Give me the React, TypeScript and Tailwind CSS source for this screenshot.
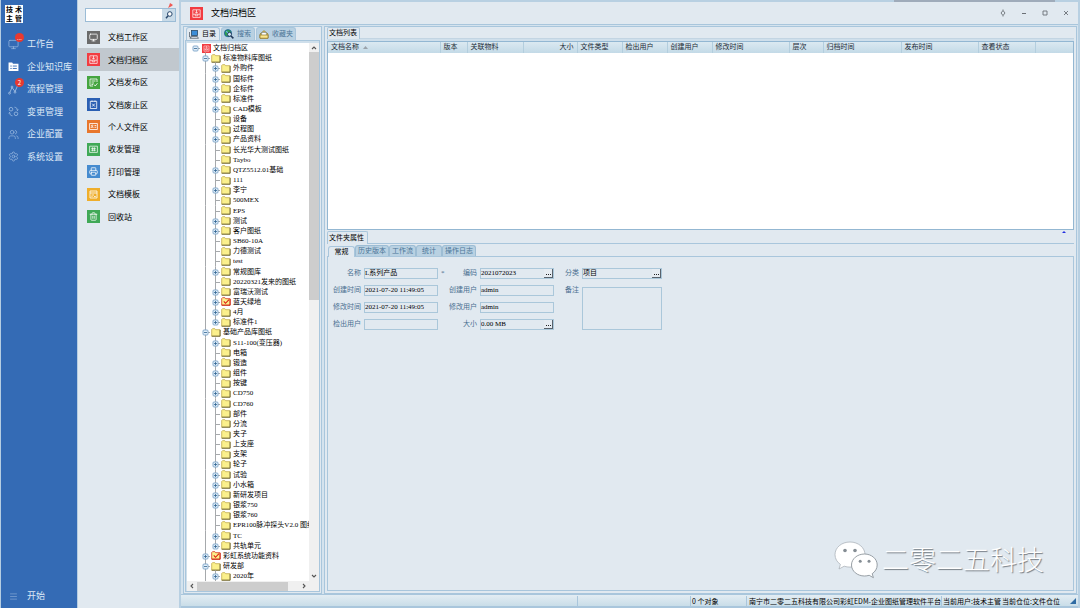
import React, { useState } from "react";
import { Menu, Monitor, Printer, Settings, Trash2, Users } from "lucide-react";

type Icon = React.ComponentType<{ className?: string; strokeWidth?: number }>

interface TreeRow {
     name: string
     level: number
     state?: "plus" | "minus"
     icon?: "root" | "check"
}

const ListFolder: Icon = ({ className }) => (
     <svg viewBox="0 0 11 10" className={className}>
          <path d="M0 0.5h4l1 1.5h6v8H0z" fill="#fff" />
          <path d="M2 4.5h1.5M4.7 4.5h4.5M2 7.2h1.5M4.7 7.2h4.5" stroke="#346bb5" strokeWidth="1" />
     </svg>
)

const FlowIcon: Icon = ({ className }) => (
     <svg viewBox="0 0 11 11" className={className} fill="none" stroke="currentColor" strokeWidth="0.9">
          <path d="M1.800 8.500L4 3.500l3 4 2.500-5.500" />
          <circle cx="1.500" cy="9.200" r="0.900" />
          <circle cx="4" cy="3" r="0.900" />
          <circle cx="7" cy="8.200" r="0.900" />
     </svg>
)

const ChangeIcon: Icon = ({ className }) => (
     <svg viewBox="0 0 11 11" className={className} fill="none" stroke="currentColor" strokeWidth="0.8">
          <circle cx="3" cy="3.200" r="1.800" />
          <circle cx="8" cy="7.800" r="1.800" />
          <path d="M6.500 1.200c2 .2 3 1.500 3 3.300M8.500 3.600l1 1 1-1M4.500 9.800c-2-.2-3-1.500-3-3.300M0.500 7.400l1-1 1 1" />
     </svg>
)

const PublishIcon: Icon = ({ className }) => (
     <svg viewBox="0 0 9 9" className={className} fill="none" stroke="currentColor" strokeWidth="0.8">
          <path d="M8 4V1H1v7h3M2.500 3h4M2.500 5h2.500M2.500 6.500h1.500M5 6.500l1.200 1.500L8.500 5.200" />
     </svg>
)

const AbolishIcon: Icon = ({ className }) => (
     <svg viewBox="0 0 9 9" className={className} fill="none" stroke="currentColor" strokeWidth="0.8">
          <path d="M1.300 1.300h6.400v7.200H1.300zM3 0.500v1.500M6 0.500v1.500M3.200 3.700l2.600 2.800M5.800 3.700L3.200 6.500" />
     </svg>
)

const PersonalIcon: Icon = ({ className }) => (
     <svg viewBox="0 0 9 9" className={className} fill="none" stroke="currentColor" strokeWidth="0.8">
          <path d="M0.600 1.500h7.800v6H0.600zM5.500 3.500h1.800M5.500 5.300h1.800M2 6c0-1.500 2.300-1.500 2.300 0" />
          <circle cx="3.200" cy="3.700" r="0.700" />
     </svg>
)

const ExchangeIcon: Icon = ({ className }) => (
     <svg viewBox="0 0 9 9" className={className} fill="none" stroke="currentColor" strokeWidth="0.7">
          <path d="M0.600 1.200h7.800v6.200H0.600zM2.200 3.400h4.600M2.200 5.200h4.600M3.600 2.300v4M5.400 2.300v4" />
     </svg>
)

const TemplateIcon: Icon = ({ className }) => (
     <svg viewBox="0 0 9 9" className={className} fill="none" stroke="currentColor" strokeWidth="0.8">
          <path d="M1 1h7v7H1zM1 3h7M2.500 5h2.500M2.500 6.500h1M5 6.500h1.800" />
     </svg>
)

const ArchiveIcon: Icon = ({ className }) => (
     <svg viewBox="0 0 13 13" className={className}>
          <rect width="13" height="13" fill="#f23c41" />
          <path d="M2.800 2.800h7.400v7.600H2.800z" fill="none" stroke="#fff" strokeWidth="0.7" />
          <path d="M6.500 2.800v3.400M5 4.700l1.500 1.500L8 4.700M3 7.200h7M5.200 7.200v1.600h2.600V7.200" fill="none" stroke="#fff" strokeWidth="0.700" />
     </svg>
)

const mainNav: { name: string; icon: Icon; badge?: string }[] = [
     { name: "工作台", icon: Monitor, badge: "..." },
     { name: "企业知识库", icon: ListFolder },
     { name: "流程管理", icon: FlowIcon, badge: "2" },
     { name: "变更管理", icon: ChangeIcon },
     { name: "企业配置", icon: Users },
     { name: "系统设置", icon: Settings },
]

const areas: { name: string; icon: Icon; color: string }[] = [
     { name: "文档工作区", icon: Monitor, color: "bg-[#6b6b6b]" },
     { name: "文档归档区", icon: ArchiveIcon, color: "bg-[#f23c41]" },
     { name: "文档发布区", icon: PublishIcon, color: "bg-[#45a540]" },
     { name: "文档废止区", icon: AbolishIcon, color: "bg-[#2b5fb3]" },
     { name: "个人文件区", icon: PersonalIcon, color: "bg-[#e8762c]" },
     { name: "收发管理", icon: ExchangeIcon, color: "bg-[#40a957]" },
     { name: "打印管理", icon: Printer, color: "bg-[#468bcf]" },
     { name: "文档模板", icon: TemplateIcon, color: "bg-[#efae2b]" },
     { name: "回收站", icon: Trash2, color: "bg-[#40a957]" },
]

const tree: TreeRow[] = [
     { name: "文档归档区", level: 0, state: "minus", icon: "root" },
     { name: "标准物料库图纸", level: 1, state: "minus" },
     { name: "外购件", level: 2, state: "plus" },
     { name: "国标件", level: 2, state: "plus" },
     { name: "企标件", level: 2, state: "plus" },
     { name: "标准件", level: 2, state: "plus" },
     { name: "CAD模板", level: 2, state: "plus" },
     { name: "设备", level: 2 },
     { name: "过程图", level: 2, state: "plus" },
     { name: "产品资料", level: 2, state: "plus" },
     { name: "长光华大测试图纸", level: 2 },
     { name: "Taybo", level: 2 },
     { name: "QTZ5512.01基础", level: 2, state: "plus" },
     { name: "111", level: 2 },
     { name: "李宁", level: 2, state: "plus" },
     { name: "500MEX", level: 2 },
     { name: "EPS", level: 2 },
     { name: "测试", level: 2, state: "plus" },
     { name: "客户图纸", level: 2, state: "plus" },
     { name: "SB60-10A", level: 2 },
     { name: "力德测试", level: 2 },
     { name: "test", level: 2 },
     { name: "常规图库", level: 2, state: "plus" },
     { name: "20220321发来的图纸", level: 2 },
     { name: "富瑞沃测试", level: 2, state: "plus" },
     { name: "蓝天绿地", level: 2, state: "plus", icon: "check" },
     { name: "4月", level: 2, state: "plus" },
     { name: "标准件1", level: 2, state: "plus" },
     { name: "基础产品库图纸", level: 1, state: "minus" },
     { name: "S11-100(变压器)", level: 2, state: "plus" },
     { name: "电箱", level: 2 },
     { name: "锻造", level: 2, state: "plus" },
     { name: "组件", level: 2, state: "plus" },
     { name: "按键", level: 2 },
     { name: "CD750", level: 2, state: "plus" },
     { name: "CD760", level: 2, state: "plus" },
     { name: "部件", level: 2 },
     { name: "分流", level: 2 },
     { name: "夹子", level: 2 },
     { name: "上支座", level: 2 },
     { name: "支架", level: 2 },
     { name: "轮子", level: 2, state: "plus" },
     { name: "试验", level: 2, state: "plus" },
     { name: "小水箱", level: 2, state: "plus" },
     { name: "新研发项目", level: 2, state: "plus" },
     { name: "银浆750", level: 2, state: "plus" },
     { name: "银浆760", level: 2 },
     { name: "EPR100脉冲探头V2.0 图纸", level: 2 },
     { name: "TC", level: 2, state: "plus" },
     { name: "共轨单元", level: 2, state: "plus" },
     { name: "彩虹系统功能资料", level: 1, state: "plus", icon: "check" },
     { name: "研发部", level: 1, state: "minus" },
     { name: "2020年", level: 2, state: "plus" },
]

const columns = [
     { name: "文档名称", width: "w-[112px]", sorted: true },
     { name: "版本", width: "w-[27px]" },
     { name: "关联物料", width: "w-[56px]" },
     { name: "大小", width: "w-[54px]", right: true },
     { name: "文件类型", width: "w-[45px]" },
     { name: "检出用户", width: "w-[45px]" },
     { name: "创建用户", width: "w-[45px]" },
     { name: "修改时间", width: "w-[77px]" },
     { name: "层次", width: "w-[34px]" },
     { name: "归档时间", width: "w-[78px]" },
     { name: "发布时间", width: "w-[77px]" },
     { name: "查看状态", width: "w-[57px]" },
     { name: "", width: "" },
]

const FolderIcon = ({ checked }: { checked?: boolean }) => (
     <svg viewBox="0 0 10 9" className="h-[9px] w-[10px] shrink-0">
          <path d="M0.7 1.5l0.8-0.8h2.4l0.8 1h4.4v6.5H0.7z" fill="#fbf08c" stroke={checked ? "#d4301c" : "#c0a94a"} strokeWidth="0.8" />
          <path d="M9.1 2v6.2H0.8" fill="none" stroke={checked ? "#c81e10" : "#6a6440"} strokeWidth="0.9" />
          {checked && <path d="M2.8 4.4l1.7 1.9L8 2.6" fill="none" stroke="#e01b10" strokeWidth="1.1" />}
     </svg>
)

// branch line with the plus / minus box on top
const Guide = ({ state, root, last }: { state?: string; root?: boolean; last?: boolean }) => (
     <svg viewBox="0 0 10 10" className="h-[10px] w-[10px] shrink-0 overflow-visible">
          {!root && <path d={last ? "M5.5 -0.5V5" : "M5.5 -0.5V10.5"} stroke="#a6a9ac" strokeWidth="1" />}
          <path d="M5 5.5h5" stroke="#a6a9ac" strokeWidth="1" />
          {state && <rect x="3" y="3" width="5" height="5" rx="1" fill="#e3eef8" stroke="#7ba4c8" strokeWidth="0.9" />}
          {state && <path d={state === "plus" ? "M4 5.5h3M5.5 4v3" : "M4 5.5h3"} stroke="#2f6392" strokeWidth="0.8" />}
     </svg>
)

const Tree = () => (
     <ul className="flex min-w-0 flex-1 flex-col overflow-hidden bg-white pl-[3px]">
          {tree.map((row, i) => {
               const next = tree[i + 1]
               return (
                    <li key={i} className="flex min-h-0 flex-1 items-center whitespace-nowrap text-[7px] leading-[10px] text-black">
                         {row.level > 0 && <span className="w-[10px] shrink-0" />}
                         {row.level > 1 && (
                              <svg viewBox="0 0 10 10" className="h-[10px] w-[10px] shrink-0 overflow-visible">
                                   <path d="M5.5 -0.5V10.5" stroke="#a6a9ac" strokeWidth="1" />
                              </svg>
                         )}
                         <Guide state={row.state} root={row.level === 0} last={row.level === 2 && !!next && next.level < 2} />
                         <span className="mr-[2px] flex w-[11px] shrink-0 justify-end">
                              {row.icon === "root" ? <ArchiveIcon className="h-[9px] w-[9px]" /> : <FolderIcon checked={row.icon === "check"} />}
                         </span>
                         {row.name}
                    </li>
               )
          })}
     </ul>
)

const Chevron = ({ d }: { d: string }) => (
     <svg viewBox="0 0 6 6" className="h-[6px] w-[6px]"><path d={d} fill="none" stroke="#555" strokeWidth="1.1" /></svg>
)

const DirectoryPanel = () => {
     const [tab, setTab] = useState("目录")
     const tabs = [
          {
               name: "目录",
               width: "w-[34px]",
               icon: (
                    <svg viewBox="0 0 10 9" className="h-[9px] w-[10px] shrink-0">
                         <rect x="2.5" y="0.5" width="6" height="5" fill="#3d8ed8" stroke="#2a4a68" strokeWidth="0.8" />
                         <path d="M0.5 2v5h2M1 8.3h8.4l-1-1.8H2.4z" fill="#dfe6ec" stroke="#46525e" strokeWidth="0.7" />
                    </svg>
               ),
          },
          {
               name: "搜索",
               width: "w-[34px]",
               icon: (
                    <svg viewBox="0 0 10 10" className="h-[10px] w-[10px] shrink-0">
                         <circle cx="4" cy="4.2" r="3.6" fill="#2fa04e" stroke="#1e5aa8" strokeWidth="0.8" />
                         <path d="M2 2.5c2 0 1 2 3 2" stroke="#69b8ee" strokeWidth="1.2" fill="none" />
                         <circle cx="5.5" cy="5.3" r="2" fill="#cfe6f8" stroke="#1d3354" strokeWidth="0.9" />
                         <path d="M7 7l2.4 2.4" stroke="#1d3354" strokeWidth="1.5" />
                    </svg>
               ),
          },
          {
               name: "收藏夹",
               width: "w-[40px]",
               icon: (
                    <svg viewBox="0 0 10 9" className="h-[9px] w-[10px] shrink-0">
                         <path d="M1 4l4-3.3L9 4v4.2H1z" fill="#f6d35c" stroke="#8d7326" strokeWidth="0.8" />
                         <rect x="2.8" y="2.7" width="4.4" height="2.6" fill="#fff" stroke="#6d86a0" strokeWidth="0.6" />
                         <path d="M1 5h8v3.2H1z" fill="#fbe58a" stroke="#8d7326" strokeWidth="0.7" />
                    </svg>
               ),
          },
     ]

     return (
          <section className="flex w-[139px] shrink-0 flex-col border border-[#a9c6dc] px-px pb-px">
               <div className="flex h-[13px] shrink-0 items-stretch gap-px pl-px text-[7px] leading-[12px]">
                    {tabs.map((t) => (
                         <button
                              key={t.name}
                              onClick={() => setTab(t.name)}
                              className={`flex items-center gap-[3px] whitespace-nowrap rounded-t-[3px] border border-b-0 border-[#a9c6dc] px-[2px] ${t.width} ${tab === t.name ? "bg-[#e1e9f0] text-black" : "bg-[#b9d1e2] text-[#4b7597]"}`}
                         >
                              {t.icon}
                              {t.name}
                         </button>
                    ))}
               </div>
               <div className="flex min-h-0 flex-1 flex-col border border-[#a9c6dc] bg-[#cfdfeb] pl-px">
                    <div className="flex min-h-0 flex-1 pt-[2px]">
                         <Tree />
                         <div className="flex w-[10px] shrink-0 flex-col items-center bg-[#f0f0f0] py-[2px]">
                              <Chevron d="M1 4l2-2 2 2" />
                              <div className="mt-px h-[248px] w-full shrink bg-[#cdcdcd]" />
                              <div className="flex-1" />
                              <Chevron d="M1 2l2 2 2-2" />
                         </div>
                    </div>
                    <div className="flex h-[10px] shrink-0 items-center bg-[#f0f0f0] pl-[2px]">
                         <Chevron d="M4 1l-2 2 2 2" />
                         <div className="ml-[2px] h-[9px] w-[91px] bg-[#cdcdcd]" />
                         <div className="flex-1" />
                         <Chevron d="M2 1l2 2-2 2" />
                         <span className="w-[12px]" />
                    </div>
               </div>
          </section>
     )
}

const DocumentTable = () => (
     <div className="flex h-[189px] shrink-0 flex-col border border-[#93b7d2] bg-white">
          <table className="w-full table-fixed text-[7px] leading-[11px] text-[#1c2a36]">
               <thead>
                    <tr className="h-[11px] bg-linear-to-b from-[#dbe9f1] to-[#c3dae7]">
                         {columns.map((col, i) => (
                              <th
                                   key={i}
                                   className={`whitespace-nowrap border-r border-[#b3cede] p-0 pr-[3px] pl-[3px] font-normal last:border-r-0 ${col.width} ${col.right ? "text-right" : "text-left"}`}
                              >
                                   {col.name}
                                   {col.sorted && (
                                        <svg viewBox="0 0 5 3" className="ml-[4px] inline-block h-[3px] w-[5px] align-middle"><path d="M0 3l2.5-3L5 3z" fill="#9aa2aa" /></svg>
                                   )}
                              </th>
                         ))}
                    </tr>
               </thead>
               <tbody></tbody>
          </table>
     </div>
)

interface FieldProps {
     id: string
     label: string
     value?: string
     mark?: string
     picker?: boolean
}

const Field: React.FC<FieldProps> = ({ id, label, value = "", mark, picker }) => {
     const [text, setText] = useState(value)

     return (
          <>
               <div className="flex whitespace-nowrap text-[#4a7090]">
                    {mark && <span>{mark}</span>}
                    <label htmlFor={id} className="ml-auto">{label}</label>
               </div>
               <div className="flex h-[11px] items-stretch border border-[#aac7da]">
                    <input
                         id={id}
                         value={text}
                         onChange={(e) => setText(e.target.value)}
                         className="w-full min-w-0 flex-1 bg-transparent text-[7px] leading-[9px] text-black outline-none"
                    />
                    {picker && (
                         <button type="button" aria-label={`选择${label}`} className="flex w-[9px] items-end justify-center border-r border-b border-[#59636d] bg-[#e6ecf2] pb-px">
                              <svg viewBox="0 0 7 3" className="h-[3px] w-[7px]"><path d="M1 1.5h1M3 1.5h1M5 1.5h1" stroke="#222" strokeWidth="1" /></svg>
                         </button>
                    )}
               </div>
          </>
     )
}

const PropertiesPanel = () => {
     const [tab, setTab] = useState("常规")
     const tabs = [
          { name: "常规", width: "w-[27px]" },
          { name: "历史版本", width: "w-[34px]" },
          { name: "工作流", width: "w-[27px]" },
          { name: "统计", width: "w-[26px]" },
          { name: "操作日志", width: "w-[34px]" },
     ]

     return (
          <>
               <div className="mt-px flex h-[13px] shrink-0 border-b border-[#a9c6dc]">
                    <h2 className="-mb-px w-[41px] rounded-t-[2px] border border-b-0 border-[#a9c6dc] bg-[#e1e9f0] pl-px text-[7px] leading-[12px] text-black">文件夹属性</h2>
               </div>
               <div className="flex h-[13px] shrink-0 items-end border-b border-[#a9c6dc] pl-px">
                    {tabs.map((t) => (
                         <button
                              key={t.name}
                              onClick={() => setTab(t.name)}
                              className={`h-[11px] whitespace-nowrap rounded-t-[3px] border border-b-0 text-center text-[7px] leading-[10px] ${t.width} ${tab === t.name ? "-mb-px border-[#a9c6dc] bg-[#e1e9f0] text-black" : "border-[#9dbdd4] bg-[#b9d1e2] text-[#4b7597]"}`}
                         >
                              {t.name}
                         </button>
                    ))}
               </div>
               <form className="flex-1 border border-t-0 border-[#a9c6dc] pt-[11px] pl-[3px] text-[7px] leading-[11px]">
                    <div className="grid grid-cols-[30px_74px_36px_74px_22px_80px] items-center gap-x-[3px] gap-y-[6px]">
                         <Field id="name" label="名称" value="L系列产品" />
                         <Field id="code" label="编码" value="2021072023" mark="*" picker />
                         <Field id="category" label="分类" value="项目" picker />
                         <Field id="created" label="创建时间" value="2021-07-20 11:49:05" />
                         <Field id="creator" label="创建用户" value="admin" />
                         <label htmlFor="remark" className="text-right text-[#4a7090]">备注</label>
                         <textarea id="remark" className="row-span-3 h-[43px] w-full resize-none self-end border border-[#aac7da] bg-transparent outline-none" />
                         <Field id="modified" label="修改时间" value="2021-07-20 11:49:05" />
                         <Field id="modifier" label="修改用户" value="admin" />
                         <span />
                         <Field id="checkout" label="检出用户" />
                         <Field id="size" label="大小" value="0.00 MB" picker />
                    </div>
               </form>
          </>
     )
}

const Watermark = () => (
     <div className="absolute right-[36px] bottom-[28px] flex items-center gap-[4px]">
          <svg viewBox="0 0 44 39" className="h-[39px] w-[44px] overflow-visible">
               <path d="M16 1C7.500 1 1 6.600 1 13.700c0 4 2.100 7.400 5.400 9.700L5 28l5.200-2.800c1.900.6 3.800.9 5.800.9 8.500 0 15-5.500 15-12.400S24.500 1 16 1z" fill="#fff" stroke="#a4abb1" strokeWidth="0.7" />
               <circle cx="11" cy="9.500" r="1.800" fill="#858d94" />
               <circle cx="21" cy="9.500" r="1.800" fill="#858d94" />
               <path d="M30.500 13C23.300 13 17.500 17.900 17.500 24s5.800 11 13 11c1.600 0 3.200-.3 4.700-.7l4.200 2.400-1.200-4c3-2 5-5.200 5-8.700 0-6.100-5.600-11-12.700-11z" fill="#fff" stroke="#8d959c" strokeWidth="0.900" />
               <circle cx="26.200" cy="20.300" r="1.500" fill="#858d94" />
               <circle cx="35" cy="20.300" r="1.500" fill="#858d94" />
          </svg>
          <span className="text-[27px] font-light leading-[30px] text-white [text-shadow:1px_1px_1px_#747c84]">二零二五科技</span>
     </div>
)

const App: React.FC = () => {
     const [area, setArea] = useState("文档归档区")

     return (
          <div className="relative flex h-screen min-h-[600px] overflow-hidden bg-[#e1e9f0] font-['Liberation_Serif','Noto_Sans_CJK_SC',sans-serif] text-black">
               {/* Main menu */}
               <nav className="flex w-[78px] shrink-0 flex-col border-r border-l border-[#b5cde2] bg-[#346bb5] font-['Noto_Sans_CJK_SC',sans-serif] text-[#dce8f6]">
                    <div className="mt-[5px] ml-[4px] grid h-[18px] w-[18px] grid-cols-2 place-items-center bg-white text-[7px] font-bold leading-[9px] text-black">
                         <span>技</span><span>术</span><span>主</span><span>管</span>
                    </div>
                    <ul className="mt-[10px] flex h-[135px] flex-col">
                         {mainNav.map((item) => (
                              <li key={item.name} className="flex-1">
                                   <a href="#" className="flex h-full items-center pl-[7px] text-[9px] leading-[14px]">
                                        <span className="relative mr-[8px] flex w-[11px] justify-center">
                                             <item.icon className={item.icon === ListFolder ? "h-[9px] w-[11px]" : "h-[11px] w-[11px] text-[#9dbce2]"} strokeWidth={1.5} />
                                             {item.badge && (
                                                  <span className="absolute -top-[6px] left-[7px] flex h-[9px] w-[9px] items-center justify-center rounded-full bg-[#e8392f] text-[6px] leading-[9px] text-white">{item.badge}</span>
                                             )}
                                        </span>
                                        {item.name}
                                   </a>
                              </li>
                         ))}
                    </ul>
                    <div className="flex-1" />
                    <button className="mb-[5px] flex items-center pl-[8px] text-[9px] leading-[14px]">
                         <Menu className="mr-[9px] h-[9px] w-[9px] text-[#7fa3d3]" strokeWidth={2} />
                         开始
                    </button>
               </nav>

               {/* Document areas */}
               <aside className="flex w-[101px] shrink-0 flex-col font-['Noto_Sans_CJK_SC',sans-serif]">
                    <div className="relative mt-[8px] mr-[3px] ml-[7px] flex h-[14px] border border-[#9bbcd6]">
                         <input aria-label="查找" className="min-w-0 flex-1 bg-white text-[8px] outline-none" />
                         <button aria-label="查找" className="flex w-[13px] items-center justify-center bg-[#c9dbe8]">
                              <svg viewBox="0 0 8 8" className="h-[8px] w-[8px]"><circle cx="4.800" cy="3" r="2.300" fill="#fff" stroke="#27466b" strokeWidth="1" /><path d="M3.100 4.700L1 7.200" stroke="#27466b" strokeWidth="1.400" /></svg>
                         </button>
                         <svg viewBox="0 0 5 5" className="absolute -top-[6px] right-[2px] h-[5px] w-[5px]"><path d="M2 0l3 2-1.500 1.200L0 5l1.200-2.500z" fill="#ef5a55" /></svg>
                    </div>
                    <ul className="mt-[4px] flex h-[202px] flex-col">
                         {areas.map((item) => (
                              <li key={item.name} className="flex-1">
                                   <button
                                        onClick={() => setArea(item.name)}
                                        className={`flex h-full w-full items-center pl-[9px] text-[8px] leading-[12px] ${area === item.name ? "bg-[#c1c8ce]" : ""}`}
                                   >
                                        <span className={`mr-[8px] flex h-[13px] w-[13px] items-center justify-center ${item.color}`}>
                                             <item.icon className={item.icon === ArchiveIcon ? "h-[13px] w-[13px]" : "h-[9px] w-[9px] text-white"} strokeWidth={2} />
                                        </span>
                                        {item.name}
                                   </button>
                              </li>
                         ))}
                    </ul>
               </aside>

               {/* Document window */}
               <main className="relative flex min-w-0 flex-1 flex-col border-x-2 border-t-2 border-[#b8d0e2]">
                    <div className="absolute -top-[2px] right-[23px] h-[2px] w-[161px] bg-[#9fabba]" />
                    <header className="flex h-[23px] shrink-0 items-center border-b border-[#a9c6dc] pr-[8px] pl-[9px] font-['Noto_Sans_CJK_SC',sans-serif]">
                         <ArchiveIcon className="mr-[8px] h-[13px] w-[13px]" />
                         <h1 className="text-[9px] leading-[14px]">文档归档区</h1>
                         <div className="ml-auto flex gap-[13px] text-[#6b7076]">
                              <button aria-label="刷新"><svg viewBox="0 0 8 8" className="h-[8px] w-[8px]"><path d="M4 1.500l2 2.500-2 2.500-2-2.500zM4 0.500v1M4 6.500v1" fill="none" stroke="currentColor" strokeWidth="0.900" /></svg></button>
                              <button aria-label="最小化"><svg viewBox="0 0 8 8" className="h-[8px] w-[8px]"><path d="M2 4.500h4" stroke="currentColor" strokeWidth="1" /></svg></button>
                              <button aria-label="最大化"><svg viewBox="0 0 8 8" className="h-[8px] w-[8px]"><path d="M2 2h4v4H2z" fill="none" stroke="currentColor" strokeWidth="0.900" /></svg></button>
                              <button aria-label="关闭"><svg viewBox="0 0 8 8" className="h-[8px] w-[8px]"><path d="M2 2l4 4M6 2L2 6" stroke="currentColor" strokeWidth="0.900" /></svg></button>
                         </div>
                    </header>

                    <div className="flex min-h-0 flex-1 gap-[2px] bg-[#d5e3ee] pt-px pr-px pl-[2px]">
                         <div className="flex bg-[#e1e9f0]"><DirectoryPanel /></div>
                         <section className="relative flex min-w-0 flex-1 flex-col border border-[#a9c6dc] bg-[#e1e9f0] px-[2px] pb-[2px]">
                              <div className="flex h-[12px] shrink-0 border-b border-[#c3d5e3]">
                                   <h2 className="-mb-px w-[33px] rounded-t-[2px] border border-b-0 border-[#a9c6dc] bg-[#e1e9f0] pl-px text-[7px] leading-[11px]">文档列表</h2>
                              </div>
                              <div className="h-[2px] shrink-0 bg-[#cfdfeb]" />
                              <DocumentTable />
                              <PropertiesPanel />
                              <span className="absolute top-[204px] right-[10px] border-x-2 border-b-2 border-x-transparent border-b-[#2530e0]" />
                         </section>
                    </div>

                    <footer className="flex h-[14px] shrink-0 items-center border-t border-b-2 border-[#a9c6dc] bg-linear-to-b from-[#e3edf3] to-[#c9dde8] font-['Noto_Sans_CJK_SC',sans-serif] text-[7px] leading-[10px] whitespace-nowrap">
                         <span className="flex-1" />
                         <span className="w-[113px] border-l border-[#a9c6dc]">&nbsp;</span>
                         <span className="w-[56px] border-l border-[#a9c6dc] pl-px">0 个对象</span>
                         <span className="w-[195px] border-l border-[#a9c6dc] pl-[2px]">南宁市二零二五科技有限公司彩虹EDM-企业图纸管理软件平台</span>
                         <span className="w-[61px] border-l border-[#a9c6dc] pl-px">当前用户:技术主管</span>
                         <span className="w-[68px]">当前仓位:文件仓位</span>
                         <svg viewBox="0 0 6 6" className="mr-[2px] h-[6px] w-[6px]"><path d="M6 0v6H0z" fill="#2f6ba3" /></svg>
                    </footer>
               </main>

               <Watermark />
          </div>
     )
}
export default App
